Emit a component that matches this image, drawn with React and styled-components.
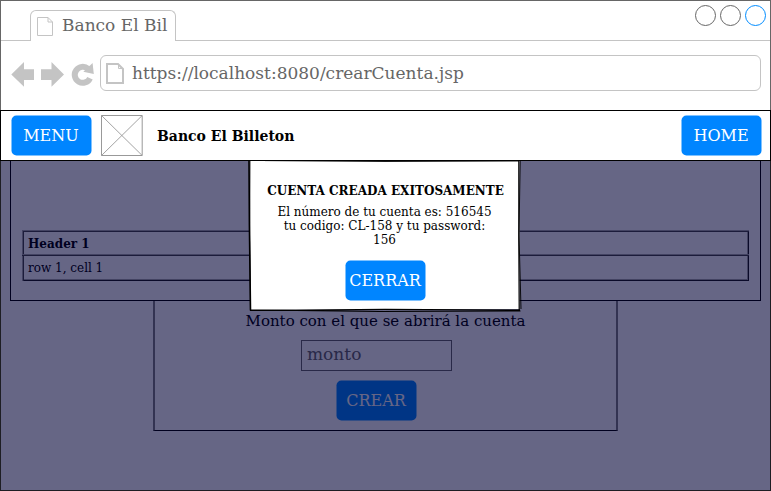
import React from 'react';
import styled, { createGlobalStyle } from 'styled-components';

const GlobalStyle = createGlobalStyle`
  *, *::before, *::after { box-sizing: border-box; }
  body { margin: 0; background: #fff; font-family: "DejaVu Serif", "Liberation Serif", serif; }
`;

const Window = styled.div`
  width: 771px;
  height: 491px;
  overflow: hidden;
  background: #fff;
  display: flex;
  flex-direction: column;
`;

const Chrome = styled.div`
  height: 110px;
  border: 1px solid #666;
  border-bottom: 0;
`;

const TabStrip = styled.div`
  height: 40px;
  display: flex;
  align-items: flex-end;
`;

const StripLine = styled.div`
  width: ${(p) => p.$width || 'auto'};
  flex: ${(p) => (p.$width ? 'none' : 1)};
  height: 40px;
  border-bottom: 1px solid #c4c4c4;
`;

const Tab = styled.div`
  width: 146px;
  height: 31px;
  padding-left: 6px;
  display: flex;
  align-items: center;
  gap: 8px;
  border: 1px solid #c4c4c4;
  border-bottom: 0;
  border-radius: 6px 6px 0 0;
  color: #666;
  font-size: 17px;
  white-space: nowrap;
`;

const TabTitle = styled.span`
  height: 30px;
  line-height: 28px;
`;

const WindowButtons = styled.div`
  display: flex;
  justify-content: flex-end;
  gap: 3px;
  padding: 3px 4px 0 0;
`;

const Toolbar = styled.div`
  height: 69px;
  padding: 14px 9px 0 10px;
  display: flex;
`;

const NavIcons = styled.svg`
  width: 89px;
  height: 36px;
  flex: none;
`;

const AddressBar = styled.div`
  flex: 1;
  height: 36px;
  padding-left: 5px;
  display: flex;
  align-items: center;
  gap: 8px;
  border: 1px solid #c4c4c4;
  border-radius: 6px;
  color: #666;
  font-size: 17px;
  line-height: 34px;
`;

const SiteHeader = styled.header`
  height: 51px;
  padding: 0 8px 0 10px;
  display: flex;
  align-items: center;
  border: 1px solid #000;
`;

const Logo = styled.svg`
  width: 42px;
  height: 41px;
  margin-left: 9px;
`;

const Brand = styled.h1`
  flex: 1;
  margin: 0 0 0 14px;
  font-size: 14px;
  line-height: 20px;
`;

const Button = styled.button`
  width: 81px;
  height: 41px;
  padding: 0 1px 0 0;
  flex: none;
  border: 0;
  clip-path: inset(0.5px round 5px);
  background: #0085ff;
  color: #fff;
  font: 16px/40px "DejaVu Serif", serif;
  white-space: nowrap;
`;

const Content = styled.main`
  position: relative;
  height: 330px;
  display: flex;
  flex-direction: column;
  align-items: center;
  border: 1px solid #1e1e24;
  border-top: 0;
`;

const AccountsPanel = styled.section`
  width: 751px;
  height: 140px;
  padding: 69px 11px 0;
  border: 1px solid #000;
  border-top: 0;
`;

const Table = styled.div`
  width: 727px;
  height: 51px;
  box-shadow: inset 1px 1px #a8a8a8, inset 2px 2px #484848, inset -1px -1px #1a1a1a, inset -2px -2px #a8a8a8;
`;

const Row = styled.div`
  height: ${(p) => (p.$head ? 24 : 26)}px;
  padding-left: 6px;
  font: ${(p) => (p.$head ? 'bold' : 'normal')} 12px/28px "DejaVu Serif", serif;
  box-shadow: ${(p) => (p.$head ? 'none' : 'inset 0 1px #a8a8a8, inset 0 2px #484848')};
`;

const CreateForm = styled.section`
  width: 465px;
  height: 130px;
  display: flex;
  flex-direction: column;
  align-items: center;
  border: 2px solid #808080;
  border-top: 0;
  border-bottom: 1px solid #000;
`;

const Label = styled.label`
  height: 39px;
  padding-top: 10px;
  font-size: 15px;
  line-height: 20px;
`;

const AmountInput = styled.div`
  width: 151px;
  height: 31px;
  margin-right: 18px;
  margin-bottom: 9px;
  padding-left: 5px;
  border: 1px solid #666;
  color: #666;
  font-size: 17px;
  line-height: 27px;
`;

const CreateButton = styled(Button)`
  margin-right: 18px;
`;

const Shade = styled.div`
  position: absolute;
  inset: 0;
  background: rgba(0, 0, 51, 0.6);
`;

const Dialog = styled.div`
  position: absolute;
  top: 0;
  left: 247px;
  width: 274px;
  height: 152px;
  padding-top: 20px;
  display: flex;
  flex-direction: column;
  align-items: center;
`;

const SketchFrame = styled.svg`
  position: absolute;
  inset: 0;
  width: 274px;
  height: 152px;
`;

const DialogTitle = styled.h2`
  position: relative;
  margin: 0 0 4px;
  padding-left: 1px;
  font: bold 12px/20px "DejaVu Serif", serif;
  white-space: nowrap;
`;

const DialogText = styled.p`
  position: relative;
  margin: 0 0 13px;
  padding-right: 1px;
  height: 42px;
  font: 12px/14px "DejaVu Serif", serif;
  text-align: center;
  white-space: nowrap;
`;

const CloseButton = styled(Button)`
  position: relative;
  margin-left: 1px;
`;

function PageIcon({ bold }) {
  return bold ? (
    <svg width="18" height="21" viewBox="0 0 18 21" fill="none" stroke="#c4c4c4">
      <path d="M1 1H12L17 6V20H1Z" strokeWidth="2" />
      <path d="M12.5 1V5.5H17" strokeWidth="1" />
    </svg>
  ) : (
    <svg width="17" height="20" viewBox="0 -1 17 20" fill="none" stroke="#c4c4c4">
      <path d="M.5 .5H11L15.5 5V18.5H.5ZM11 .5V5H15.5" />
    </svg>
  );
}

export default function App() {
  return (
    <Window>
      <GlobalStyle />
      <Chrome>
        <TabStrip>
          <StripLine $width="29px" />
          <Tab><PageIcon /><TabTitle>Banco El Bil</TabTitle></Tab>
          <StripLine>
            <WindowButtons>
              {['#666', '#666', '#008cff'].map((color, i) => (
                <svg key={i} width="22" height="22" viewBox="0 0 22 22">
                  <circle cx="11.5" cy="11.5" r="10" fill="none" stroke={color} />
                </svg>
              ))}
            </WindowButtons>
          </StripLine>
        </TabStrip>
        <Toolbar>
          <NavIcons viewBox="11 55 89 36" fill="#c4c4c4">
            <path d="M11.3 74.5L24 62V69.2H34V80H24V86.8Z" />
            <path d="M64 74.5L51.5 62V69.2H41V80H51.5V86.8Z" />
            <path d="M88 68.8A8 8 0 1 0 90 78.2" fill="none" stroke="#c4c4c4" strokeWidth="6" />
            <path d="M92.6 63L93.8 74L83.3 71.8Z" />
          </NavIcons>
          <AddressBar><PageIcon bold />https://localhost:8080/crearCuenta.jsp</AddressBar>
        </Toolbar>
      </Chrome>
      <SiteHeader>
        <Button>MENU</Button>
        <Logo viewBox="0 0 42 41" fill="none" stroke="#999">
          <path d="M.5 .5H41.2V40.5H.5Z" />
          <path d="M.5 .5L41.2 40.5M41.2 .5L.5 40.5" strokeWidth=".9" />
        </Logo>
        <Brand>Banco El Billeton</Brand>
        <Button>HOME</Button>
      </SiteHeader>
      <Content>
        <AccountsPanel>
          <Table>
            <Row $head>Header 1</Row>
            <Row>row 1, cell 1</Row>
          </Table>
        </AccountsPanel>
        <CreateForm>
          <Label>Monto con el que se abrirá la cuenta</Label>
          <AmountInput>monto</AmountInput>
          <CreateButton>CREAR</CreateButton>
        </CreateForm>
        <Shade />
        <Dialog>
          <SketchFrame viewBox="248 161 274 152" fill="none" stroke="#000">
            <path d="M249.5 160L250.5 310L519.5 309L519.5 160Z" fill="#fff" stroke="none" />
            <path d="M249 160L249.4 225L250.5 310.5" strokeWidth="1.6" />
            <path d="M250 160L249.7 235L250.5 310.5" strokeWidth=".8" />
            <path d="M250 310.5L385 309.4L520 310M250 310L380 311.5L520.5 311" strokeWidth="1.1" />
            <path d="M518.8 160L518.8 240L519.2 311" strokeWidth="1.2" />
            <path d="M520.2 160L519 235L521 309" strokeWidth=".9" />
            <path d="M265 160.6L385 161.5L519 161" strokeWidth=".9" />
          </SketchFrame>
          <DialogTitle>CUENTA CREADA EXITOSAMENTE</DialogTitle>
          <DialogText>
            El número de tu cuenta es: 516545<br />
            tu codigo: CL-158 y tu password:<br />
            156
          </DialogText>
          <CloseButton>CERRAR</CloseButton>
        </Dialog>
      </Content>
    </Window>
  );
}
